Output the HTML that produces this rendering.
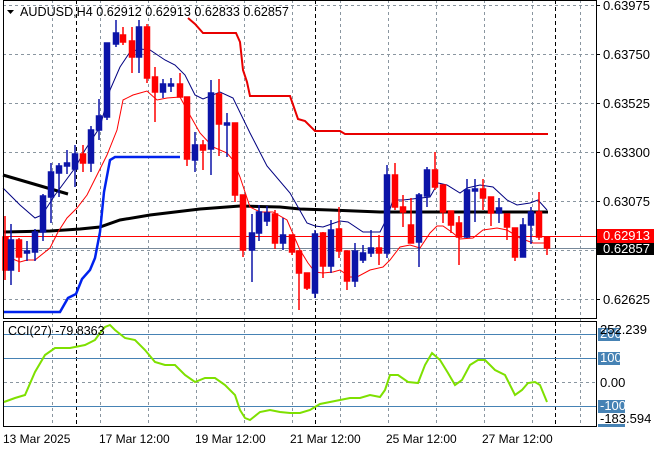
<!DOCTYPE html>
<html><head><meta charset="utf-8"><style>
html,body{margin:0;padding:0;background:#fff;width:660px;height:450px;overflow:hidden}
svg{display:block;font-family:"Liberation Sans",sans-serif}
</style></head><body>
<svg width="660" height="450" viewBox="0 0 660 450" xmlns="http://www.w3.org/2000/svg">
<rect width="660" height="450" fill="#fff"/>
<g stroke="#8a96a0" stroke-width="1" stroke-dasharray="3,3">
<line x1="3" y1="5.5" x2="596" y2="5.5"/><line x1="3" y1="54.5" x2="596" y2="54.5"/><line x1="3" y1="103.5" x2="596" y2="103.5"/><line x1="3" y1="152.5" x2="596" y2="152.5"/><line x1="3" y1="201.5" x2="596" y2="201.5"/><line x1="3" y1="250.5" x2="596" y2="250.5"/><line x1="3" y1="299.5" x2="596" y2="299.5"/>
<line x1="52.5" y1="0" x2="52.5" y2="426"/><line x1="100.5" y1="0" x2="100.5" y2="426"/><line x1="148.5" y1="0" x2="148.5" y2="426"/><line x1="196.5" y1="0" x2="196.5" y2="426"/><line x1="244.5" y1="0" x2="244.5" y2="426"/><line x1="292.5" y1="0" x2="292.5" y2="426"/><line x1="340.5" y1="0" x2="340.5" y2="426"/><line x1="388.5" y1="0" x2="388.5" y2="426"/><line x1="436.5" y1="0" x2="436.5" y2="426"/><line x1="484.5" y1="0" x2="484.5" y2="426"/><line x1="532.5" y1="0" x2="532.5" y2="426"/><line x1="580.5" y1="0" x2="580.5" y2="426"/>
</g>
<g stroke="#000" stroke-width="1" stroke-dasharray="4,3">
<line x1="76.5" y1="0" x2="76.5" y2="426"/><line x1="315.5" y1="0" x2="315.5" y2="426"/><line x1="555.5" y1="0" x2="555.5" y2="426"/>
</g>
<line x1="3" y1="236.5" x2="596" y2="236.5" stroke="#ff0000" stroke-width="1"/>
<line x1="3" y1="248.5" x2="596" y2="248.5" stroke="#778899" stroke-width="1"/>
<polyline fill="none" stroke="#000" stroke-width="3" points="3,175 68,194"/>
<polyline fill="none" stroke="#000" stroke-width="3" points="3,232 50,231 80,229 100,227 120,220 150,215 200,209 240,206 280,207 300,209 330,210 380,212 548,212"/>
<polyline fill="none" stroke="#0022ee" stroke-width="2.5" points="3,312 60,312 68,298 76,294 82,279 90,270 95,258 100,232 104,192 110,160 115,157 180,157"/>
<polyline fill="none" stroke="#e80000" stroke-width="2" points="188,18 195,24 203,33 236,33 240,42 243,70 247,82 250,96 290,96 298,119 305,121 315,131 340,131 345,134 548,134"/>
<polyline fill="none" stroke="#000080" stroke-width="1" points="3,188 20,205 35,218 42,215 55,195 75,168 85,150 100,127 110,90 120,67 130,52 140,49 150,50 165,60 175,65 185,75 195,95 203,99 220,92 233,98 250,133 267,166 290,193 307,223 315,226 323,227 340,221 348,222 363,232 380,232 387,218 393,200 403,200 430,197 438,183 447,185 460,193 467,188 480,185 493,187 507,200 517,205 530,203 538,200 547,210"/>
<polyline fill="none" stroke="#ff0000" stroke-width="1" points="3,255 20,262 27,260 35,260 50,248 58,232 67,218 77,208 87,195 97,175 107,155 117,130 123,100 133,95 147,91 157,100 167,98 180,97 187,110 200,133 213,147 227,153 233,160 240,177 250,207 260,212 273,212 287,220 300,250 308,263 315,272 323,273 333,272 340,270 350,277 357,277 370,270 383,267 390,260 400,247 410,245 420,248 430,233 437,226 443,226 453,233 460,239 473,238 483,230 497,228 507,230 520,238 533,243 547,243"/>
<g stroke-width="1.5">
<g stroke="#ff0000" fill="#ff0000">
<line x1="5" y1="216" x2="5" y2="280"/><rect x="3" y="237" width="5" height="33"/>
<line x1="19" y1="238" x2="19" y2="272"/><rect x="16.5" y="240" width="5" height="17"/>
<line x1="83" y1="145" x2="83" y2="172"/><rect x="80.5" y="154" width="5" height="9"/>
<line x1="123" y1="27" x2="123" y2="45"/><rect x="120.5" y="35" width="5" height="7"/>
<line x1="132" y1="27" x2="132" y2="73"/><rect x="129.5" y="41" width="5" height="16"/>
<line x1="147" y1="24" x2="147" y2="83"/><rect x="144.5" y="27" width="5" height="51"/>
<line x1="155" y1="67" x2="155" y2="122"/><rect x="152.5" y="77" width="5" height="15"/>
<line x1="180" y1="73" x2="180" y2="97"/><rect x="177.5" y="84" width="5" height="13"/>
<line x1="187" y1="97" x2="187" y2="166"/><rect x="184.5" y="97" width="5" height="62"/>
<line x1="203" y1="140" x2="203" y2="170"/><rect x="200.5" y="145" width="5" height="5"/>
<line x1="219" y1="79" x2="219" y2="156"/><rect x="216.5" y="94" width="5" height="30"/>
<line x1="235" y1="123" x2="235" y2="202"/><rect x="232.5" y="123" width="5" height="72"/>
<line x1="243" y1="195" x2="243" y2="257"/><rect x="240.5" y="195" width="5" height="55"/>
<line x1="275" y1="210" x2="275" y2="249"/><rect x="272.5" y="214" width="5" height="29"/>
<line x1="292" y1="235" x2="292" y2="255"/><rect x="289.5" y="235" width="5" height="17"/>
<line x1="299" y1="251" x2="299" y2="310"/><rect x="296.5" y="251" width="5" height="22"/>
<line x1="307" y1="273" x2="307" y2="290"/><rect x="304.5" y="273" width="5" height="15"/>
<line x1="323" y1="232" x2="323" y2="278"/><rect x="320.5" y="233" width="5" height="33"/>
<line x1="339" y1="207" x2="339" y2="258"/><rect x="336.5" y="229" width="5" height="22"/>
<line x1="347" y1="251" x2="347" y2="290"/><rect x="344.5" y="251" width="5" height="30"/>
<line x1="379" y1="235" x2="379" y2="265"/><rect x="376.5" y="248" width="5" height="5"/>
<line x1="395" y1="163" x2="395" y2="210"/><rect x="392.5" y="175" width="5" height="32"/>
<line x1="403" y1="195" x2="403" y2="227"/><rect x="400.5" y="207" width="5" height="5"/>
<line x1="411" y1="198" x2="411" y2="243"/><rect x="408.5" y="225" width="5" height="18"/>
<line x1="435" y1="152" x2="435" y2="190"/><rect x="432.5" y="170" width="5" height="17"/>
<line x1="443" y1="185" x2="443" y2="223"/><rect x="440.5" y="185" width="5" height="27"/>
<line x1="451" y1="211" x2="451" y2="233"/><rect x="448.5" y="211" width="5" height="14"/>
<line x1="459" y1="216" x2="459" y2="265"/><rect x="456.5" y="223" width="5" height="14"/>
<line x1="483" y1="179" x2="483" y2="210"/><rect x="480.5" y="189" width="5" height="9"/>
<line x1="491" y1="197" x2="491" y2="226"/><rect x="488.5" y="197" width="5" height="16"/>
<line x1="507" y1="214" x2="507" y2="240"/><rect x="504.5" y="214" width="5" height="13"/>
<line x1="515" y1="228" x2="515" y2="261"/><rect x="512.5" y="228" width="5" height="29"/>
<line x1="539" y1="192" x2="539" y2="240"/><rect x="536.5" y="212" width="5" height="25"/>
<line x1="547" y1="237" x2="547" y2="255"/><rect x="544.5" y="237" width="5" height="11"/>
</g>
<g stroke="#0c14a8" fill="#0c14a8">
<line x1="11" y1="224" x2="11" y2="285"/><rect x="8.5" y="240" width="5" height="30"/>
<line x1="27" y1="241" x2="27" y2="261"/><rect x="24.5" y="251" width="5" height="2"/>
<line x1="35" y1="229" x2="35" y2="261"/><rect x="32.5" y="232" width="5" height="20"/>
<line x1="43" y1="194" x2="43" y2="241"/><rect x="40.5" y="196" width="5" height="36"/>
<line x1="51" y1="163" x2="51" y2="223"/><rect x="48.5" y="172" width="5" height="25"/>
<line x1="59" y1="163" x2="59" y2="197"/><rect x="56.5" y="166" width="5" height="7"/>
<line x1="67" y1="150" x2="67" y2="174"/><rect x="64.5" y="163" width="5" height="3"/>
<line x1="75" y1="145" x2="75" y2="187"/><rect x="72.5" y="154" width="5" height="15"/>
<line x1="91" y1="126" x2="91" y2="172"/><rect x="88.5" y="130" width="5" height="33"/>
<line x1="99" y1="99" x2="99" y2="140"/><rect x="96.5" y="116" width="5" height="14"/>
<line x1="107" y1="43" x2="107" y2="120"/><rect x="104.5" y="43" width="5" height="74"/>
<line x1="116" y1="20" x2="116" y2="47"/><rect x="113.5" y="33" width="5" height="11"/>
<line x1="139" y1="20" x2="139" y2="73"/><rect x="136.5" y="27" width="5" height="30"/>
<line x1="163" y1="79" x2="163" y2="98"/><rect x="160.5" y="84" width="5" height="8"/>
<line x1="171" y1="78" x2="171" y2="92"/><rect x="168.5" y="84" width="5" height="2"/>
<line x1="195" y1="132" x2="195" y2="172"/><rect x="192.5" y="145" width="5" height="15"/>
<line x1="211" y1="80" x2="211" y2="175"/><rect x="208.5" y="93" width="5" height="56"/>
<line x1="227" y1="113" x2="227" y2="157"/><rect x="224.5" y="123" width="5" height="2"/>
<line x1="252" y1="214" x2="252" y2="282"/><rect x="249.5" y="233" width="5" height="17"/>
<line x1="259" y1="205" x2="259" y2="241"/><rect x="256.5" y="212" width="5" height="21"/>
<line x1="267" y1="206" x2="267" y2="226"/><rect x="264.5" y="213" width="5" height="8"/>
<line x1="283" y1="218" x2="283" y2="250"/><rect x="280.5" y="235" width="5" height="8"/>
<line x1="315" y1="230" x2="315" y2="298"/><rect x="312.5" y="234" width="5" height="59"/>
<line x1="331" y1="220" x2="331" y2="273"/><rect x="328.5" y="230" width="5" height="36"/>
<line x1="355" y1="243" x2="355" y2="287"/><rect x="352.5" y="251" width="5" height="30"/>
<line x1="363" y1="245" x2="363" y2="263"/><rect x="360.5" y="253" width="5" height="7"/>
<line x1="371" y1="230" x2="371" y2="257"/><rect x="368.5" y="248" width="5" height="5"/>
<line x1="387" y1="165" x2="387" y2="258"/><rect x="384.5" y="175" width="5" height="78"/>
<line x1="419" y1="193" x2="419" y2="267"/><rect x="416.5" y="195" width="5" height="47"/>
<line x1="427" y1="167" x2="427" y2="207"/><rect x="424.5" y="170" width="5" height="26"/>
<line x1="467" y1="179" x2="467" y2="238"/><rect x="464.5" y="190" width="5" height="47"/>
<line x1="475" y1="179" x2="475" y2="222"/><rect x="472.5" y="189" width="5" height="2"/>
<line x1="499" y1="198" x2="499" y2="223"/><rect x="496.5" y="208" width="5" height="5"/>
<line x1="523" y1="218" x2="523" y2="257"/><rect x="520.5" y="225" width="5" height="32"/>
<line x1="531" y1="207" x2="531" y2="244"/><rect x="528.5" y="212" width="5" height="13"/>
</g>
</g>
<rect x="3.5" y="0.5" width="593" height="318" fill="none" stroke="#000"/>
<rect x="3.5" y="321.5" width="593" height="105" fill="none" stroke="#000"/>
<polygon points="7,10 14,10 10.5,14" fill="#000"/>
<text x="20" y="16" font-size="12.6" fill="#000">AUDUSD,H4  0.62912 0.62913 0.62833 0.62857</text>
<g font-size="13" fill="#000">
<text x="603" y="10">0.63975</text>
<text x="603" y="59">0.63750</text>
<text x="603" y="108">0.63525</text>
<text x="603" y="157">0.63300</text>
<text x="603" y="206">0.63075</text>
<text x="603" y="304">0.62625</text>
</g>
<g stroke="#000"><line x1="596" y1="5.5" x2="600" y2="5.5"/><line x1="596" y1="54.5" x2="600" y2="54.5"/><line x1="596" y1="103.5" x2="600" y2="103.5"/><line x1="596" y1="152.5" x2="600" y2="152.5"/><line x1="596" y1="201.5" x2="600" y2="201.5"/><line x1="596" y1="299.5" x2="600" y2="299.5"/></g>
<rect x="597" y="229" width="57" height="14" fill="#ff0000"/>
<text x="603" y="240" font-size="13" fill="#fff">0.62913</text>
<rect x="597" y="243" width="57" height="12" fill="#000"/>
<text x="603" y="253" font-size="13" fill="#fff">0.62857</text>
<g stroke="#4682b4" stroke-width="1">
<line x1="4" y1="334.5" x2="596" y2="334.5"/><line x1="4" y1="358.5" x2="596" y2="358.5"/><line x1="4" y1="406.5" x2="596" y2="406.5"/>
</g>
<line x1="4" y1="382.5" x2="596" y2="382.5" stroke="#8a96a0" stroke-dasharray="3,3"/>
<polyline fill="none" stroke="#7ee000" stroke-width="2" points="4,402 15,398 25,395 35,372 45,355 55,348 70,348 85,345 95,340 100,333 105,327 110,325 115,330 125,338 135,340 145,350 155,362 165,365 175,365 185,375 195,382 205,378 215,378 225,385 235,395 240,410 245,418 250,420 260,412 270,410 280,412 290,413 300,413 310,410 320,404 330,402 340,400 350,398 360,398 370,395 380,397 385,390 390,375 398,375 408,382 418,383 425,365 432,353 440,360 448,373 455,385 462,380 470,365 478,360 485,360 495,370 505,375 515,395 522,390 528,383 535,382 540,385 547,402"/>
<text x="8" y="335" font-size="12.5" fill="#000">CCI(27) -79.8363</text>
<rect x="598" y="328" width="22" height="13" fill="#4682b4"/>
<text x="600" y="338" font-size="13" fill="#fff">200</text>
<text x="600" y="334" font-size="13" fill="#000">252.239</text>
<rect x="598" y="352" width="22" height="13" fill="#4682b4"/>
<text x="600" y="362" font-size="13" fill="#fff">100</text>
<text x="600" y="387" font-size="13" fill="#000">0.00</text>
<rect x="598" y="400" width="27" height="13" fill="#4682b4"/>
<text x="600" y="410" font-size="13" fill="#fff">-100</text>
<rect x="598" y="424" width="27" height="3" fill="#4682b4"/>
<text x="600" y="423" font-size="13" fill="#000">-183.594</text>
<g font-size="12" fill="#000">
<text x="3" y="443">13 Mar 2025</text>
<text x="99" y="443">17 Mar 12:00</text>
<text x="195" y="443">19 Mar 12:00</text>
<text x="290" y="443">21 Mar 12:00</text>
<text x="386" y="443">25 Mar 12:00</text>
<text x="482" y="443">27 Mar 12:00</text>
</g>
</svg>
</body></html>
